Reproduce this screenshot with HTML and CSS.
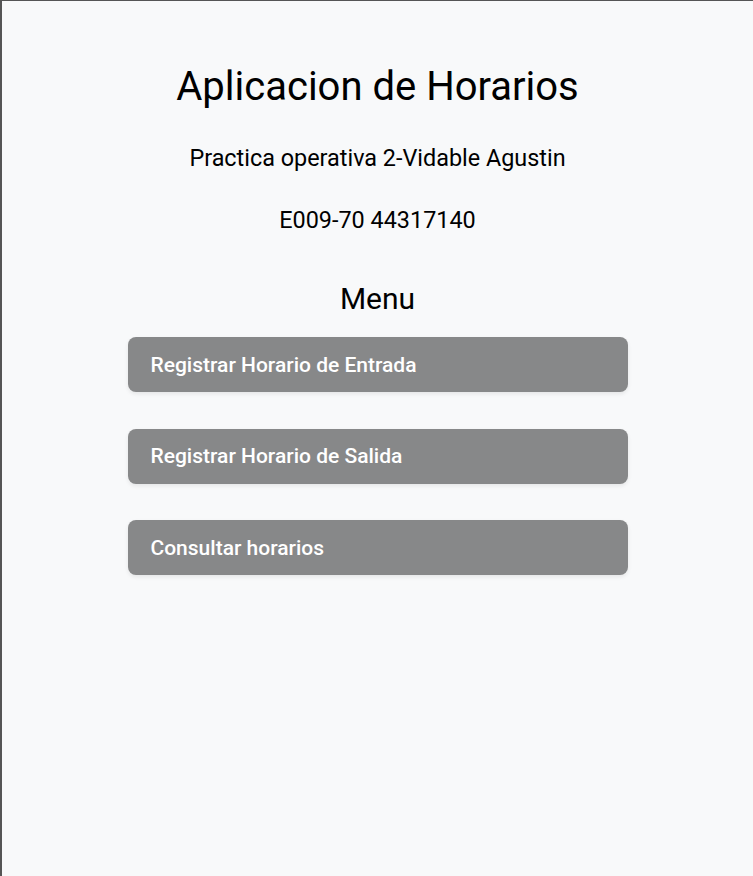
FILE: index.html
```html
<!DOCTYPE html>
<html lang="es">
<head>
<meta charset="utf-8">
<title>Aplicacion de Horarios</title>
<link rel="stylesheet" href="styles.css">
</head>
<body>
<div class="frame">
  <main class="app">
    <h1 class="title">Aplicacion de Horarios</h1>
    <p class="subtitle">Practica operativa 2-Vidable Agustin</p>
    <p class="subtitle">E009-70 44317140</p>
    <h2 class="menu-title">Menu</h2>
    <nav class="menu">
      <button class="menu-btn">Registrar Horario de Entrada</button>
      <button class="menu-btn">Registrar Horario de Salida</button>
      <button class="menu-btn">Consultar horarios</button>
    </nav>
  </main>
</div>
</body>
</html>
```
FILE: styles.css
```css
html, body {
  margin: 0;
  padding: 0;
  height: 100%;
}
body {
  background: #f8f9fa;
  font-family: Roboto, "Noto Sans", sans-serif;
  color: #000;
}
.frame {
  box-sizing: border-box;
  min-height: 100%;
  border-left: 2px solid #555;
  border-top: 1px solid #555;
}
.app {
  display: flex;
  flex-direction: column;
  align-items: center;
  padding-top: 62px;
}
.title {
  margin: 0;
  font-size: 40px;
  font-weight: 400;
  line-height: 47px;
}
.subtitle {
  margin: 35px 0 0;
  font-size: 23.4px;
  line-height: 27px;
}
.subtitle + .subtitle {
  margin-top: 35px;
}
.menu-title {
  margin: 47px 0 0;
  font-size: 30px;
  font-weight: 400;
  line-height: 35px;
}
.menu {
  display: flex;
  flex-direction: column;
  gap: 36.5px;
  width: 500px;
  margin-top: 21px;
}
.menu-btn {
  box-sizing: border-box;
  height: 55px;
  padding: 0 23px;
  border: none;
  border-radius: 8px;
  background: #878889;
  color: #fff;
  font-family: Roboto, "Noto Sans", sans-serif;
  font-size: 21px;
  font-weight: 500;
  text-align: left;
  box-shadow: 0 2px 4px rgba(0,0,0,0.08);
}
```
